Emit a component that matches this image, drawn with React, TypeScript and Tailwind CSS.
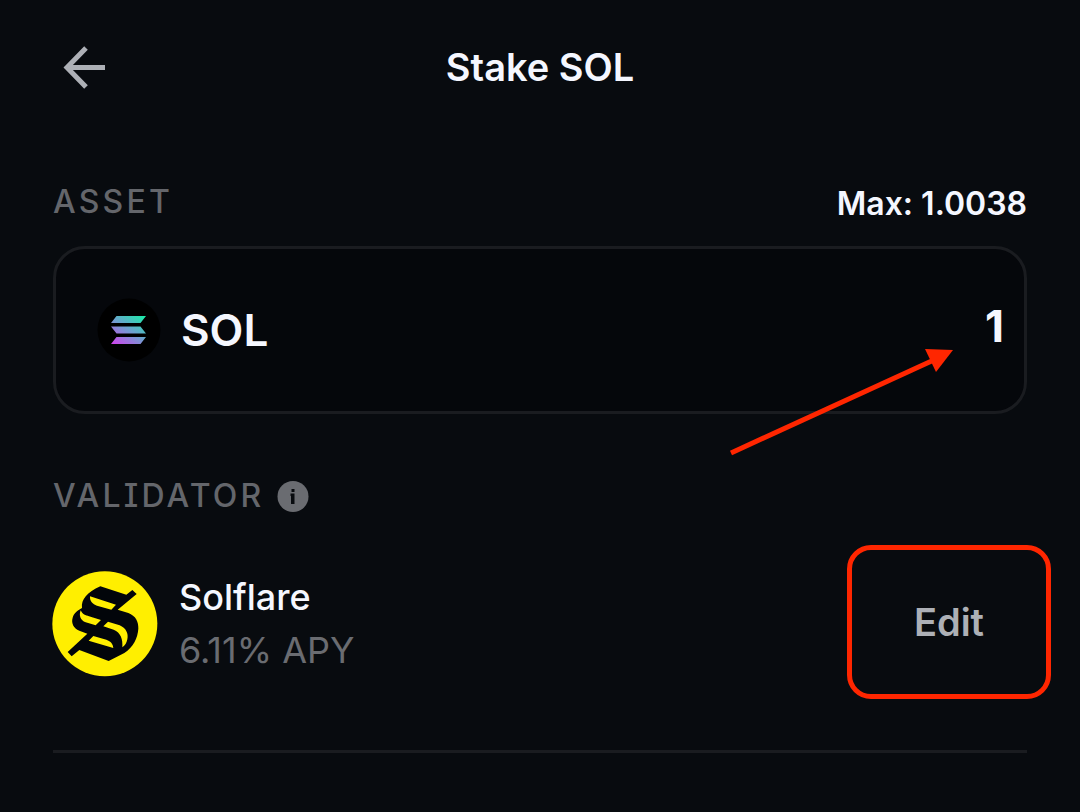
import { useState } from 'react';

const MAX_AMOUNT = '1.0038';

function BackIcon() {
  return (
    <svg width="44" height="44" viewBox="0 0 44 44" fill="none" stroke="currentColor" strokeWidth="5" aria-hidden="true">
      <path d="M25 3 L6 22.500 L25 42 M6 22.500 H44" />
    </svg>
  );
}

function SolanaIcon() {
  return (
    <svg width="64" height="64" viewBox="0 0 64 64" aria-hidden="true">
      <defs>
        <linearGradient id="solana" gradientUnits="userSpaceOnUse" x1="20" y1="50" x2="44" y2="14">
          <stop offset="0" stopColor="#d53ff0" />
          <stop offset="0.5" stopColor="#6f9fcf" />
          <stop offset="1" stopColor="#14f1a5" />
        </linearGradient>
      </defs>
      <circle cx="32" cy="32" r="31.5" fill="#000" />
      <path
        fill="url(#solana)"
        d="M19.500 18 H49 L43.500 25 H14 Z M14 28.500 H43.500 L49 35.500 H19.500 Z M19.500 39 H49 L43.500 46 H14 Z"
      />
    </svg>
  );
}

function SolflareLogo() {
  return (
    <svg width="106" height="106" viewBox="40 34 318 318" aria-hidden="true" className="shrink-0 overflow-visible">
      <circle cx="195.500" cy="192" r="157.500" fill="#ffef00" />
      <path
        fill="#02050a"
        d="M182 80 L260 105 L278 91 L291 103 L234 150 L266 160 C288 168 297 187 296 207 C294 236 281 262 254 280 L207 304 L119 271 L96 290 L84 277 L143 222 L119 213 C102 206 94 190 99 174 C102 162 113 152 127 145 C124 120 142 98 182 80 Z"
      />
      <path
        fill="#ffef00"
        d="M151 110 L229 135 L215 150 L172 138 C159 133 150 126 151 110 Z M123 152 C128 164 138 167 148 170 L184 181 L168 197 L138 188 C122 182 117 168 123 152 Z M205 186 L240 197 C259 205 267 222 263 239 C261 250 256 257 248 263 C250 238 243 219 222 210 L191 200 Z M161 229 L200 240 C214 245 220 253 221 265 L147 243 Z"
      />
    </svg>
  );
}

function InfoIcon() {
  return (
    <svg width="32" height="32" viewBox="0 0 32 32" aria-hidden="true">
      <circle cx="16" cy="16.5" r="15.5" fill="#6a6c71" />
      <path fill="#080b0f" d="M14.500 9 h3 v3 h-3 Z M13.500 13.500 h4 v10.500 h-3.500 v-8 h-0.500 Z" />
    </svg>
  );
}

function PointerArrow() {
  return (
    <svg
      width="228"
      height="112"
      viewBox="0 0 228 112"
      aria-hidden="true"
      className="pointer-events-none absolute top-[97px] right-[68px]"
    >
      <path d="M3 107 L208 13" stroke="#ff2600" strokeWidth="5" />
      <path d="M197 3 L225 4 L208 26 Z" fill="#ff2600" />
    </svg>
  );
}

export default function App() {
  const [amount, setAmount] = useState('1');

  return (
    <div className="min-h-screen bg-[#080b0f] px-[53px] pb-14 font-['Inter',sans-serif] text-[#f5f7ff]">
      <header className="grid h-[134px] grid-cols-[1fr_auto_1fr] items-center">
        <button type="button" aria-label="Back" className="ml-2 w-fit text-[#adb0b6]">
          <BackIcon />
        </button>
        <h1 className="text-[38px] leading-12 font-semibold">Stake SOL</h1>
      </header>

      <main>
        <div className="mt-11 flex h-12 items-center justify-between">
          <label htmlFor="amount" className="text-[32px] font-medium tracking-widest text-[#64666b]">
            ASSET
          </label>
          <button type="button" onClick={() => setAmount(MAX_AMOUNT)} className="pt-1 text-[32px] font-semibold">
            Max: {MAX_AMOUNT}
          </button>
        </div>

        <div className="relative mt-5 flex h-[168px] items-center rounded-[32px] border-[3px] border-[#1a1c20] bg-[#05070b] pr-5 pl-[41px]">
          <SolanaIcon />
          <span className="ml-5 text-[44px] leading-14 font-semibold">SOL</span>
          <input
            id="amount"
            type="text"
            inputMode="decimal"
            value={amount}
            onChange={(e) => setAmount(e.target.value)}
            className="min-w-0 flex-1 bg-transparent pb-2 text-right text-[44px] leading-14 font-bold outline-none"
          />
          <PointerArrow />
        </div>

        <div className="mt-[58px] flex h-12 items-center gap-3">
          <h2 className="text-[32px] font-medium tracking-widest text-[#64666b] [font-feature-settings:'cv08']">
            VALIDATOR
          </h2>
          <button type="button" aria-label="About validators">
            <InfoIcon />
          </button>
        </div>

        <div className="mt-[25px] flex items-center justify-between">
          <div className="flex items-center gap-5 pt-1">
            <SolflareLogo />
            <div className="text-[36px] leading-[53px]">
              <p className="font-medium">Solflare</p>
              <p className="text-[#6a6c71]">6.11% APY</p>
            </div>
          </div>
          <button
            type="button"
            className="-mr-6 h-[154px] w-[204px] rounded-[24px] border-[5px] border-[#ff2600] text-[38px] font-semibold text-[#adb0b6]"
          >
            Edit
          </button>
        </div>

        <hr className="mt-[51px] border-t-[3px] border-[#1a1c20]" />
      </main>
    </div>
  );
}
